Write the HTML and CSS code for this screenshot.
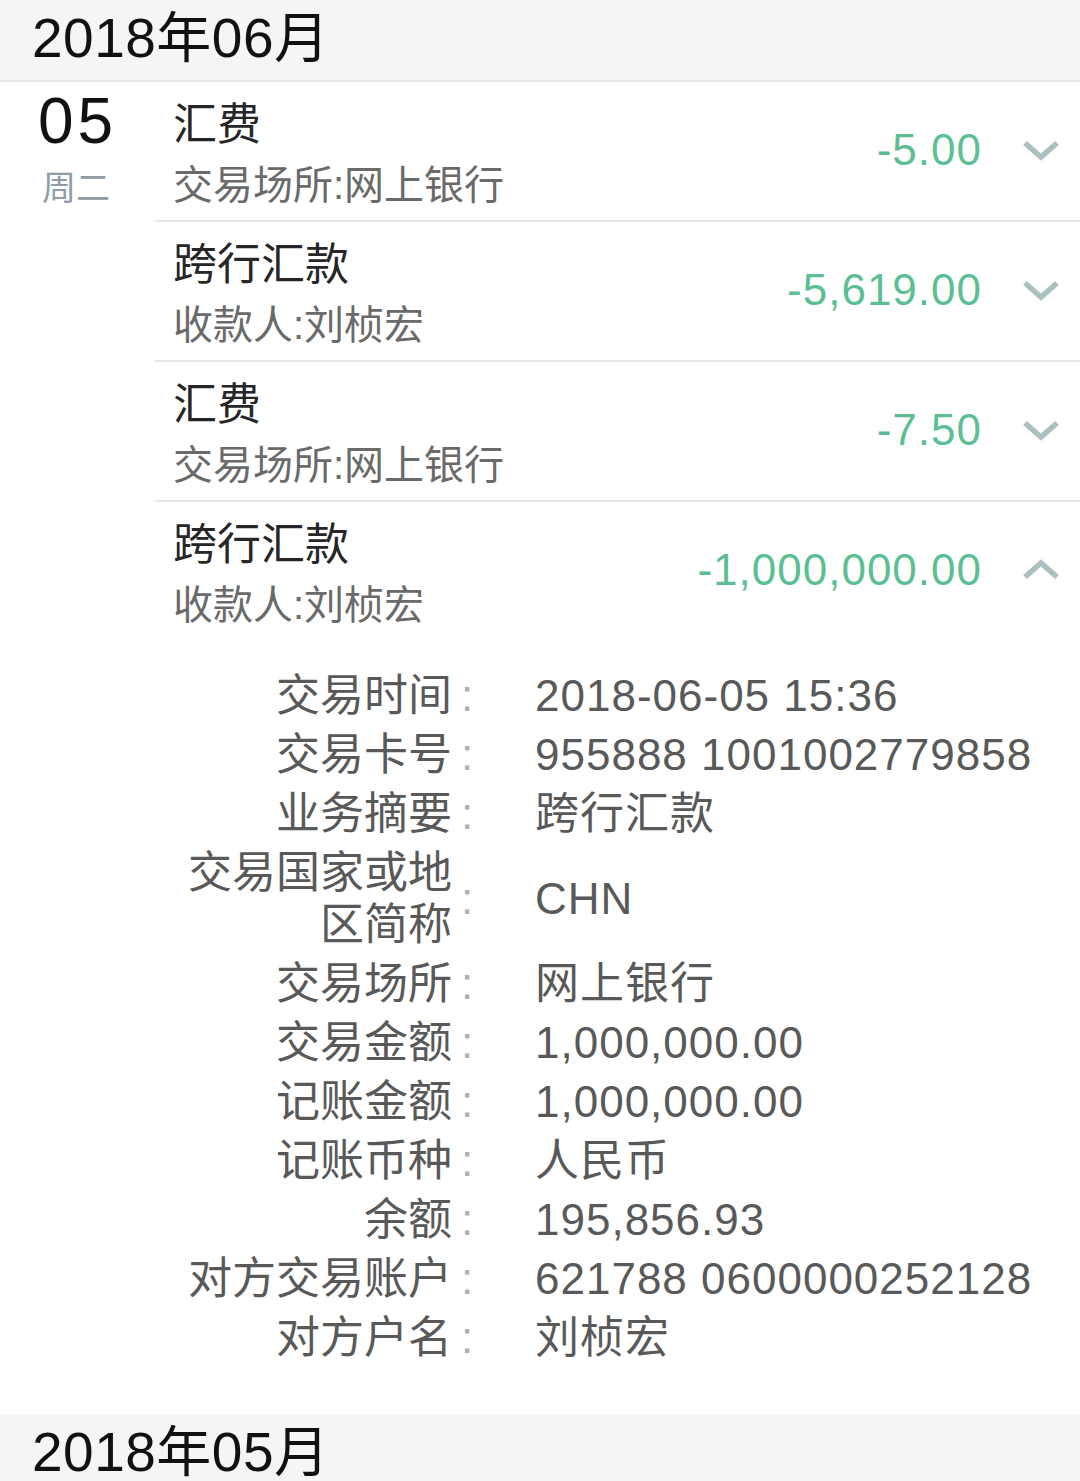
FILE: index.html
```html
<!DOCTYPE html>
<html lang="zh-CN">
<head>
    <meta charset="UTF-8">
    <meta name="viewport" content="width=device-width, initial-scale=1.0">
    <title>交易明细</title>
    <link rel="stylesheet" href="styles.css">
</head>
<body>

    <!-- June -->
    <div class="month">2018年06月</div>

    <div class="day">
        <div class="day-date">
            <div class="day-num">05</div>
            <div class="day-week">周二</div>
        </div>

        <div class="day-list">
            <div class="txn">
                <div class="txn-head">
                    <div class="txn-info">
                        <div class="txn-title">汇费</div>
                        <div class="txn-sub">交易场所:网上银行</div>
                    </div>
                    <div class="txn-amount">-5.00</div>
                    <svg class="chevron" width="38" height="22" viewBox="0 0 38 22"><polyline points="3,4 19,18 35,4"/></svg>
                </div>
            </div>

            <div class="txn">
                <div class="txn-head">
                    <div class="txn-info">
                        <div class="txn-title">跨行汇款</div>
                        <div class="txn-sub">收款人:刘桢宏</div>
                    </div>
                    <div class="txn-amount">-5,619.00</div>
                    <svg class="chevron" width="38" height="22" viewBox="0 0 38 22"><polyline points="3,4 19,18 35,4"/></svg>
                </div>
            </div>

            <div class="txn">
                <div class="txn-head">
                    <div class="txn-info">
                        <div class="txn-title">汇费</div>
                        <div class="txn-sub">交易场所:网上银行</div>
                    </div>
                    <div class="txn-amount">-7.50</div>
                    <svg class="chevron" width="38" height="22" viewBox="0 0 38 22"><polyline points="3,4 19,18 35,4"/></svg>
                </div>
            </div>

            <div class="txn open">
                <div class="txn-head">
                    <div class="txn-info">
                        <div class="txn-title">跨行汇款</div>
                        <div class="txn-sub">收款人:刘桢宏</div>
                    </div>
                    <div class="txn-amount">-1,000,000.00</div>
                    <svg class="chevron" width="38" height="22" viewBox="0 0 38 22"><polyline points="3,18 19,4 35,18"/></svg>
                </div>

                <!-- expanded detail -->
                <div class="detail">
                    <div class="detail-label">交易时间</div><div class="detail-colon">:</div><div class="detail-value">2018-06-05 15:36</div>
                    <div class="detail-label">交易卡号</div><div class="detail-colon">:</div><div class="detail-value">955888 1001002779858</div>
                    <div class="detail-label">业务摘要</div><div class="detail-colon">:</div><div class="detail-value">跨行汇款</div>
                    <div class="detail-label">交易国家或地区简称</div><div class="detail-colon">:</div><div class="detail-value">CHN</div>
                    <div class="detail-label">交易场所</div><div class="detail-colon">:</div><div class="detail-value">网上银行</div>
                    <div class="detail-label">交易金额</div><div class="detail-colon">:</div><div class="detail-value">1,000,000.00</div>
                    <div class="detail-label">记账金额</div><div class="detail-colon">:</div><div class="detail-value">1,000,000.00</div>
                    <div class="detail-label">记账币种</div><div class="detail-colon">:</div><div class="detail-value">人民币</div>
                    <div class="detail-label">余额</div><div class="detail-colon">:</div><div class="detail-value">195,856.93</div>
                    <div class="detail-label">对方交易账户</div><div class="detail-colon">:</div><div class="detail-value">621788 0600000252128</div>
                    <div class="detail-label">对方户名</div><div class="detail-colon">:</div><div class="detail-value">刘桢宏</div>
                </div>
            </div>
        </div>
    </div>

    <!-- May -->
    <div class="month">2018年05月</div>

</body>
</html>
```

FILE: styles.css
```css
body {
    margin: 0;
    font-family: "Liberation Sans", "Noto Sans CJK SC", sans-serif;
    background-color: #fff;
    color: #333;
}

/* Month header */
.month {
    display: flex;
    align-items: center;
    height: 66px;
    padding: 0 0 14px 32px;
    background-color: #f5f5f5;
    border-bottom: 2px solid #e4e4e4;
    font-size: 55px;
    letter-spacing: 0.5px;
    color: #111;
}

/* Day block */
.day {
    display: flex;
}

.day-date {
    width: 117px;
    flex-shrink: 0;
    padding: 8px 0 0 38px;
}

.day-num {
    font-size: 64px;
    line-height: 62px;
    letter-spacing: 4px;
    color: #111;
}

.day-week {
    margin-top: 16px;
    margin-left: 4px;
    font-size: 34px;
    line-height: 40px;
    color: #8f9ba6;
}

.day-list {
    flex: 1;
}

/* Transaction rows */
.txn {
    border-bottom: 2px solid #e4e4e4;
}

.txn.open {
    border-bottom: none;
    padding-bottom: 50px;
}

.txn-head {
    display: flex;
    align-items: center;
    height: 120px;
    padding: 13px 20px 5px 18px;
}

.txn-info {
    flex: 1;
}

.txn-title {
    font-size: 44px;
    line-height: 60px;
    color: #262626;
}

.txn-sub {
    font-size: 40px;
    line-height: 60px;
    color: #6a6a6a;
}

.txn-amount {
    margin-top: -10px;
    font-size: 44px;
    letter-spacing: 1px;
    color: #5cbf94;
}

.chevron {
    margin: -10px 0 0 40px;
    fill: none;
    stroke: #abc1c1;
    stroke-width: 5.5;
}

/* Expanded details */
.detail {
    display: grid;
    grid-template-columns: 272px 30px 1fr;
    row-gap: 7px;
    align-items: center;
    padding: 30px 0 0 25px;
    font-size: 44px;
    line-height: 52px;
    color: #595959;
}

.detail-label {
    text-align: right;
}

.detail-colon {
    text-align: center;
    color: #b0b0b0;
}

.detail-value {
    padding-left: 53px;
    letter-spacing: 1px;
}
```
